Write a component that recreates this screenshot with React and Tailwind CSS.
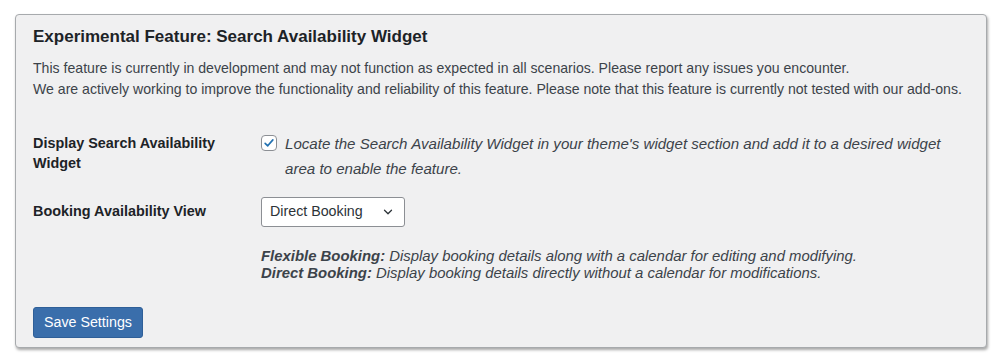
import React from 'react';

export default function App() {
    return (
        <div className="w-[1000px] h-[363px] bg-white pt-[14px] pl-[15px] font-['Liberation_Sans',Arial,sans-serif]">
            <div className="w-[972px] h-[334px] bg-[#f0f0f1] border border-[#a7aaad] rounded-[4px] shadow-[1px_2px_3px_rgba(0,0,0,0.35)] px-[17px] pt-[11px] text-[#3c434a]">
                <h2 className="text-[17px] font-semibold text-[#1d2327] leading-[22px]">
                    Experimental Feature: Search Availability Widget
                </h2>
                <div className="mt-[10px] text-[14.1px] leading-[21px] whitespace-nowrap">
                    <p>This feature is currently in development and may not function as expected in all scenarios. Please report any issues you encounter.</p>
                    <p>We are actively working to improve the functionality and reliability of this feature. Please note that this feature is currently not tested with our add-ons.</p>
                </div>

                <div className="mt-[33px] flex">
                    <div className="w-[228px] shrink-0 text-[14.4px] font-semibold text-[#1d2327] leading-[20px] pr-4">
                        Display Search Availability Widget
                    </div>
                    <label className="flex items-start gap-[8px] text-[15.1px] italic leading-[25px]">
                        <span className="mt-[2px] w-[16px] h-[16px] shrink-0 rounded-[4px] border border-[#8c8f94] bg-white flex items-center justify-center">
                            <svg width="14" height="14" viewBox="0 0 20 20">
                                <path d="M4.5 10.5 L8.2 14 L15.5 5.5" fill="none" stroke="#2271b1" strokeWidth="2.4" strokeLinecap="round" strokeLinejoin="round" />
                            </svg>
                        </span>
                        <span className="-mt-[2px] w-[675px]">
                            Locate the Search Availability Widget in your theme's widget section and add it to a desired widget area to enable the feature.
                        </span>
                    </label>
                </div>

                <div className="mt-[16px] flex items-center">
                    <div className="w-[228px] shrink-0 text-[14.4px] font-semibold text-[#1d2327]">
                        Booking Availability View
                    </div>
                    <div className="w-[144px] h-[30px] bg-white border border-[#8c8f94] rounded-[3px] flex items-center justify-between pl-[8px] pr-[9px] text-[14.25px] text-[#2c3338]">
                        <span>Direct Booking</span>
                        <svg width="14" height="14" viewBox="0 0 20 20">
                            <path d="M5 7.5 L10 12.5 L15 7.5" fill="none" stroke="#2c3338" strokeWidth="1.8" strokeLinecap="round" strokeLinejoin="round" />
                        </svg>
                    </div>
                </div>

                <div className="mt-[21px] ml-[228px] text-[14.9px] italic leading-[17px] whitespace-nowrap">
                    <p><strong className="font-semibold">Flexible Booking:</strong> Display booking details along with a calendar for editing and modifying.</p>
                    <p><strong className="font-semibold">Direct Booking:</strong> Display booking details directly without a calendar for modifications.</p>
                </div>

                <button className="mt-[25px] h-[31px] px-[10px] bg-[#3a6eab] text-white text-[14.25px] rounded-[3px] border border-[#2f5f98]">
                    Save Settings
                </button>
            </div>
        </div>
    );
}
